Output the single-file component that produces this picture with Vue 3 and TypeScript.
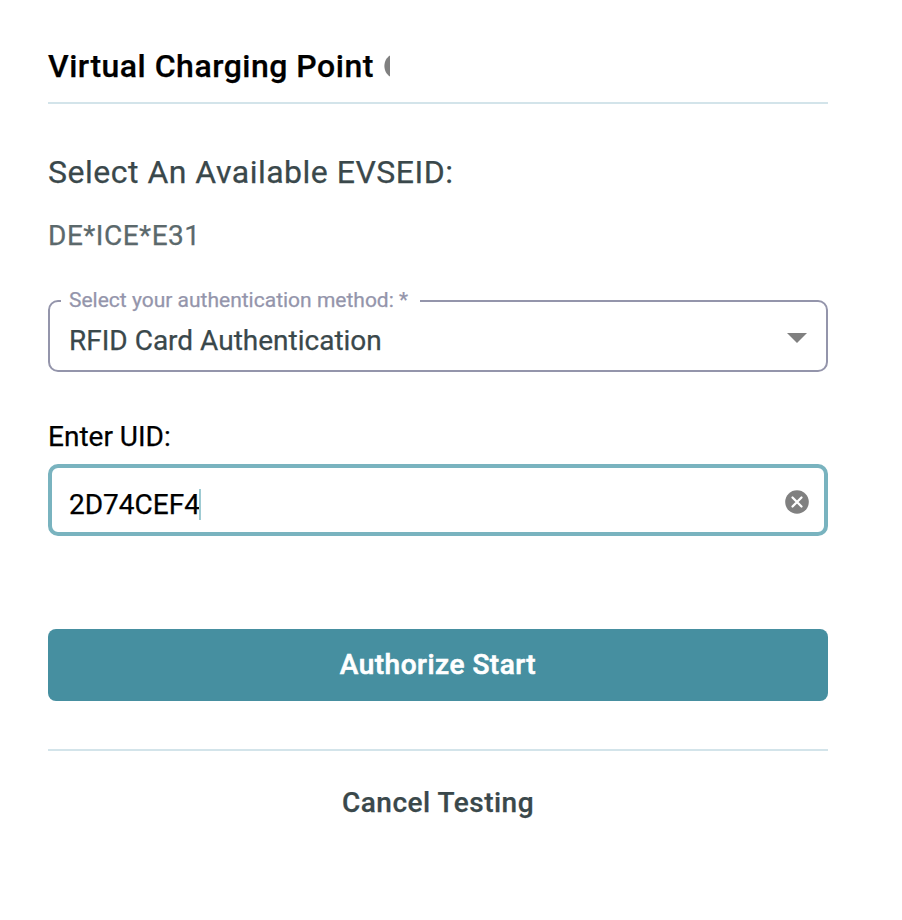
<script setup lang="ts">
import { ref } from 'vue'

const evseId = ref('DE*ICE*E31')
const method = ref('RFID Card Authentication')
const uid = ref('2D74CEF4')
</script>

<template>
  <main class="panel">
    <header class="header">
      <h1 class="title">Virtual Charging Point</h1>
      <svg class="info" width="6" height="22" viewBox="0 0 6 22">
        <path d="M6 0.500C2.500 2.600 0.400 6.500 0.400 11s2.100 8.400 5.600 10.500z" fill="#808080" />
      </svg>
    </header>
    <h2 class="subtitle">Select An Available EVSEID:</h2>
    <p class="evse">{{ evseId }}</p>
    <fieldset class="select">
      <legend class="legend">Select your authentication method: *</legend>
      <div class="select-row">
        <span class="select-value">{{ method }}</span>
        <svg class="arrow" width="20" height="10" viewBox="0 0 20 10"><path d="M0 0h20L10 10z" fill="#808080" /></svg>
      </div>
    </fieldset>
    <label class="uid-label">Enter UID:</label>
    <div class="input">
      <span class="uid">{{ uid }}</span><span class="caret"></span>
      <svg class="clear" width="24" height="24" viewBox="0 0 24 24">
        <circle cx="12" cy="12" r="11.800" fill="#808080" />
        <path d="M7.500 7.500l9 9M16.500 7.500l-9 9" stroke="#fff" stroke-width="2.300" stroke-linecap="round" />
      </svg>
    </div>
    <button class="primary">Authorize Start</button>
    <div class="divider"></div>
    <button class="cancel">Cancel Testing</button>
  </main>
</template>

<style>
body {
  background: #fff;
}
</style>

<style scoped>
.panel {
  box-sizing: border-box;
  width: 828px;
  height: 920px;
  padding: 40px 0 0 48px;
  display: flex;
  flex-direction: column;
  font-family: Roboto, "Liberation Sans", sans-serif;
  -webkit-text-stroke-width: 0.25px;
}
.header {
  box-sizing: border-box;
  height: 64px;
  display: flex;
  align-items: flex-start;
  border-bottom: 2px solid #d3e4ea;
}
.title {
  margin: 0;
  font-size: 32px;
  line-height: 52px;
  font-weight: 500;
  letter-spacing: 0.5px;
  white-space: nowrap;
  color: #000;
}
.info {
  margin: 15px 0 0 10px;
}
.subtitle {
  margin: 44px 0 0;
  font-size: 32px;
  line-height: 48px;
  font-weight: 400;
  letter-spacing: 0.5px;
  white-space: nowrap;
  color: #3a484b;
}
.evse {
  margin: 20px 0 0;
  font-size: 28px;
  line-height: 40px;
  letter-spacing: 0.5px;
  color: #5b696c;
}
.select {
  box-sizing: border-box;
  min-width: 0;
  height: 84px;
  margin: 32px 0 0;
  padding: 0 19px;
  border: 2px solid #9495ab;
  border-radius: 10px;
}
.legend {
  height: 26px;
  margin-left: -8px;
  padding: 0 12px 0 8px;
  font-size: 21px;
  line-height: 24px;
  white-space: nowrap;
  color: #9495ab;
}
.select-row {
  display: flex;
  align-items: center;
  justify-content: space-between;
  height: 54px;
}
.arrow {
  margin-top: -6px;
}
.select-value {
  font-size: 28px;
  line-height: 40px;
  color: #3a484b;
}
.uid-label {
  margin-top: 45px;
  font-size: 28px;
  line-height: 40px;
  color: #000;
}
.input {
  box-sizing: border-box;
  height: 72px;
  margin-top: 7px;
  padding: 8px 15px 0 17px;
  display: flex;
  align-items: center;
  border: 4px solid #79b3bf;
  border-radius: 10px;
}
.uid {
  margin-top: 2px;
  font-size: 28px;
  line-height: 40px;
  color: #000;
}
.caret {
  width: 2px;
  height: 31px;
  margin: 1px 0 0 -1px;
  background: #9fcbd3;
}
.clear {
  margin: -4px 0 0 auto;
}
.primary {
  height: 72px;
  margin-top: 93px;
  padding: 0;
  border: 0;
  border-radius: 8px;
  background: #468fa0;
  color: #fff;
  font: 500 28px/72px Roboto, sans-serif;
  letter-spacing: 0.5px;
  -webkit-text-stroke-width: 0.6px;
}
.divider {
  height: 2px;
  margin-top: 48px;
  background: #d3e4ea;
}
.cancel {
  margin-top: 32px;
  padding: 0;
  border: 0;
  background: none;
  color: #3a484b;
  font: 500 28px/40px Roboto, sans-serif;
  letter-spacing: 0.5px;
}
</style>
